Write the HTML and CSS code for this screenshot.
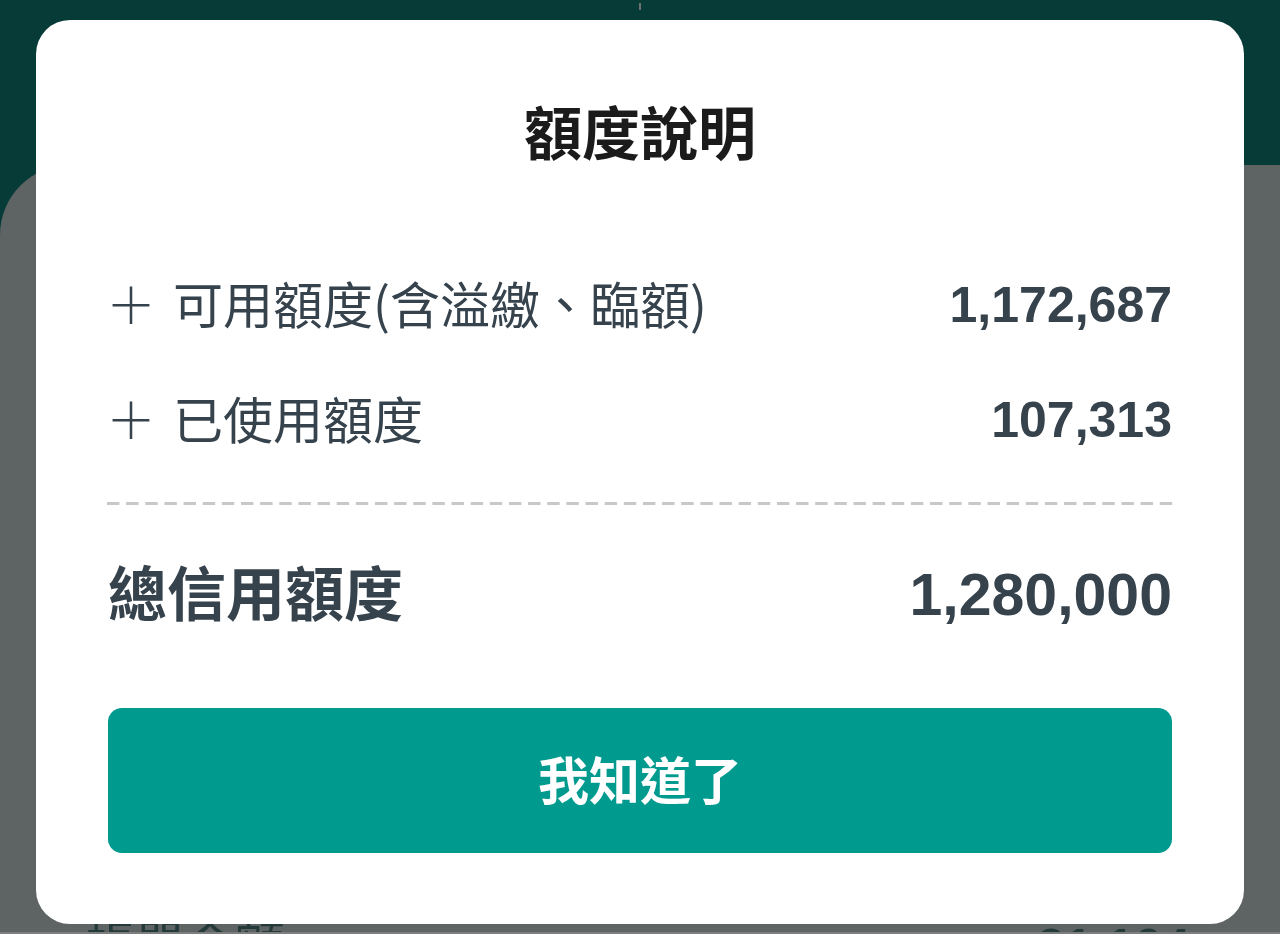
FILE: index.html
```html
<!DOCTYPE html>
<html lang="zh-Hant">
<head>
<meta charset="utf-8">
<title>額度說明</title>
<link rel="stylesheet" href="styles.css">
</head>
<body>
  <div class="page">
    <header class="topbar"><span class="notch"></span></header>
    <main class="card">
      <div class="card-row">
        <span class="card-label">帳單金額</span>
        <span class="card-value">21,104</span>
      </div>
    </main>
    <div class="bottom-strip"></div>
  </div>

  <div class="overlay">
    <section class="modal" role="dialog" aria-labelledby="modal-title">
      <h1 class="modal-title" id="modal-title">額度說明</h1>
      <ul class="items">
        <li class="item">
          <span class="item-label"><span class="plus">＋</span>可用額度(含溢繳、臨額)</span>
          <span class="item-value">1,172,687</span>
        </li>
        <li class="item">
          <span class="item-label"><span class="plus">＋</span>已使用額度</span>
          <span class="item-value">107,313</span>
        </li>
      </ul>
      <div class="divider"></div>
      <div class="total">
        <span class="total-label">總信用額度</span>
        <span class="total-value">1,280,000</span>
      </div>
      <button class="confirm" type="button">我知道了</button>
    </section>
  </div>
</body>
</html>
```

FILE: styles.css
```css
* {
  box-sizing: border-box;
}

html, body {
  margin: 0;
  padding: 0;
  height: 100%;
}

body {
  width: 1280px;
  height: 934px;
  overflow: hidden;
  background: #073b38;
  font-family: "Noto Sans CJK TC", "Noto Sans", sans-serif;
  position: relative;
}

.page {
  display: flex;
  flex-direction: column;
  height: 934px;
}

.topbar {
  height: 165px;
  background: #073b38;
  display: flex;
  justify-content: center;
  padding-top: 3px;
  flex-shrink: 0;
}

.notch {
  width: 2px;
  height: 7px;
  background: #6b6f6e;
}

.card {
  flex: 1;
  background: #5e6463;
  border-top-left-radius: 70px;
  display: flex;
  flex-direction: column;
  justify-content: flex-end;
  padding: 0 90px 0 85px;
}

.card-row {
  display: flex;
  justify-content: space-between;
  align-items: flex-start;
  height: 12px;
  overflow: hidden;
}

.card-label {
  font-size: 50px;
  line-height: 1;
  color: #24393a;
  margin-top: -4px;
}

.card-value {
  font-family: "Liberation Sans", Arial, sans-serif;
  font-weight: 700;
  font-size: 50px;
  line-height: 1;
  color: #24393a;
  margin-top: 2px;
}

.bottom-strip {
  height: 2px;
  background: #7c7f7e;
  flex-shrink: 0;
}

.overlay {
  position: absolute;
  inset: 0;
  display: flex;
  justify-content: center;
  align-items: flex-start;
  padding-top: 20px;
}

.modal {
  width: 1208px;
  height: 904px;
  background: #ffffff;
  border-radius: 34px;
  padding: 70px 72px 71px;
  display: flex;
  flex-direction: column;
}

.modal-title {
  margin: 0;
  height: 80px;
  line-height: 80px;
  font-size: 58px;
  font-weight: 700;
  text-align: center;
  color: #1b1b1b;
}

.items {
  list-style: none;
  margin: 77px 0 0;
  padding: 0;
}

.item {
  height: 115px;
  display: flex;
  align-items: center;
  justify-content: space-between;
}

.item-label {
  font-size: 50px;
  line-height: 1;
  color: #36424c;
  display: flex;
  align-items: center;
  padding-bottom: 6px;
}

.plus {
  font-weight: 300;
  margin-left: -2px;
  margin-right: 17px;
}

.item-value {
  font-family: "Liberation Sans", Arial, sans-serif;
  font-weight: 700;
  font-size: 50px;
  color: #36424c;
}

.divider {
  margin: 25px -7px 0 -1px;
  height: 3px;
  background-image: linear-gradient(to right, #c8c8c8 0 12px, transparent 12px 19px);
  background-size: 19px 3px;
  background-repeat: round no-repeat;
}

.total {
  margin-top: 30px;
  height: 120px;
  display: flex;
  align-items: center;
  justify-content: space-between;
}

.total-label {
  font-size: 59px;
  font-weight: 700;
  line-height: 1;
  color: #36424c;
  padding-bottom: 10px;
}

.total-value {
  font-family: "Liberation Sans", Arial, sans-serif;
  font-weight: 700;
  font-size: 59px;
  color: #36424c;
}

.confirm {
  margin-top: 53px;
  height: 145px;
  width: 100%;
  border: none;
  border-radius: 14px;
  background: #009a8f;
  color: #ffffff;
  font-family: "Noto Sans CJK TC", "Noto Sans", sans-serif;
  font-size: 51px;
  font-weight: 700;
  padding: 0 0 6px;
  cursor: pointer;
}
```
